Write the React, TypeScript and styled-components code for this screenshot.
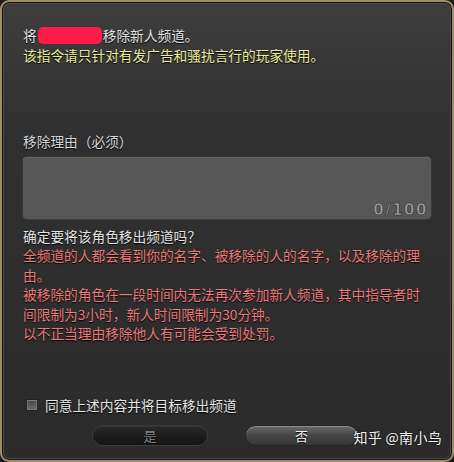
import styled, { createGlobalStyle } from "styled-components";

const Global = createGlobalStyle`
    html, body {
        margin: 0;
        padding: 0;
        background: #1b1b1b;
    }
    * {
        box-sizing: border-box;
    }
`
const Frame = styled.div`
    position: relative;
    width: 454px;
    height: 462px;
    border: 2px solid #a08d68;
    border-radius: 9px;
    background: linear-gradient(180deg, #3d3d3d 0%, #303030 30%, #2b2b2b 100%);
    box-shadow: inset 0 0 0 1px #151515, inset 0 0 0 2px #4a4a4a;
    padding: 23px 18px 0 21px;
    font-family: "Noto Sans CJK SC", "Noto Sans", sans-serif;
    font-size: 13.7px;
    display: flex;
    flex-direction: column;
`
const Line = styled.div<{ $color?: string; $lh?: number }>`
    color: ${p => p.$color || "#e4e4e4"};
    line-height: ${p => p.$lh || 20}px;
    white-space: nowrap;
    text-shadow: 0 1px 1px #000;
`
const Redacted = styled.span`
    display: inline-block;
    width: 64px;
    height: 17px;
    margin: 0 1px;
    vertical-align: -3px;
    background: #ff1a48;
    border-radius: 5px;
`
const Label = styled(Line)`
    margin-top: 66px;
    color: #d6d6d6;
`
const TextBox = styled.div`
    position: relative;
    margin-top: 6px;
    width: 408px;
    height: 62px;
    border-radius: 4px;
    background: #575757;
    box-shadow: inset 0 1px 0 #666, 0 0 0 1px #3a3a3a;
`
const Counter = styled.span`
    position: absolute;
    right: 3px;
    bottom: 0;
    font-family: "DejaVu Sans", sans-serif;
    font-size: 15px;
    font-weight: 700;
    line-height: 17px;
    letter-spacing: 1.5px;
    color: #9c9c9c;
    -webkit-text-stroke: 0.6px #262626;
`
const Confirm = styled(Line)`
    margin-top: 7px;
`
const CheckRow = styled.label`
    margin-top: 51px;
    display: flex;
    align-items: center;
    gap: 7px;
    height: 20px;
    padding-left: 3px;
    color: #e4e4e4;
    text-shadow: 0 1px 1px #000;
`
const Box = styled.span`
    width: 12px;
    height: 12px;
    border: 1px solid #222;
    background: linear-gradient(180deg, #4a4a4a, #6a6a6a);
    box-shadow: inset 0 0 0 1px #777;
`
const Buttons = styled.div`
    margin-top: 10px;
    display: flex;
    gap: 37px;
    padding-left: 69px;
`
const Button = styled.div<{ $active?: boolean }>`
    width: ${p => (p.$active ? 113 : 116)}px;
    height: 21px;
    border-radius: 11px;
    display: flex;
    align-items: center;
    justify-content: center;
    font-size: 13px;
    color: ${p => (p.$active ? "#f2f2f2" : "#868686")};
    background: ${p =>
        p.$active
            ? "linear-gradient(180deg, #6a6a6a 0%, #474747 50%, #363636 100%)"
            : "linear-gradient(180deg, #2a2a2a 0%, #1b1b1b 60%, #151515 100%)"};
    border: 1px solid ${p => (p.$active ? "#252525" : "#3c3c3c")};
    box-shadow: ${p => (p.$active ? "inset 0 1px 0 #8a8a8a" : "inset 0 1px 0 #333")};
    text-shadow: 0 1px 1px #000;
`
const Watermark = styled.span`
    position: absolute;
    right: 10px;
    bottom: 13px;
    color: #f4f4f4;
    font-size: 14px;
    letter-spacing: 0.3px;
    text-shadow: 0 0 2px #000;
`

const App = () => {
    return (
        <>
            <Global />
            <Frame>
                <Line>将<Redacted />移除新人频道。</Line>
                <Line $color="#ecec9c">该指令请只针对有发广告和骚扰言行的玩家使用。</Line>
                <Label>移除理由（必须）</Label>
                <TextBox>
                    <Counter>0/100</Counter>
                </TextBox>
                <Confirm>确定要将该角色移出频道吗？</Confirm>
                <Line $color="#ec7a7a" $lh={19.5}>全频道的人都会看到你的名字、被移除的人的名字，以及移除的理</Line>
                <Line $color="#ec7a7a" $lh={19.5}>由。</Line>
                <Line $color="#ec7a7a" $lh={19.5}>被移除的角色在一段时间内无法再次参加新人频道，其中指导者时</Line>
                <Line $color="#ec7a7a" $lh={19.5}>间限制为3小时，新人时间限制为30分钟。</Line>
                <Line $color="#ec7a7a" $lh={19.5}>以不正当理由移除他人有可能会受到处罚。</Line>
                <CheckRow>
                    <Box />
                    同意上述内容并将目标移出频道
                </CheckRow>
                <Buttons>
                    <Button>是</Button>
                    <Button $active>否</Button>
                </Buttons>
                <Watermark>知乎 @南小鸟</Watermark>
            </Frame>
        </>
    )
}

export default App;
